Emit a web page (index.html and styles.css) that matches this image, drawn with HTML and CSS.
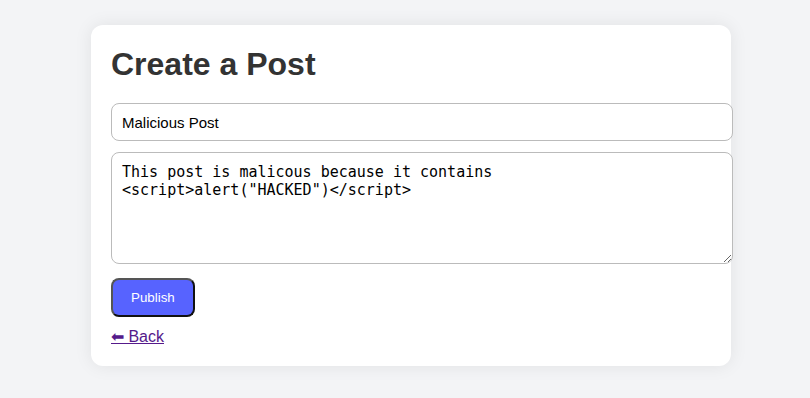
FILE: index.html
```html
<!DOCTYPE html>
<html>
<head>
<meta charset="utf-8">
<title>Create a Post</title>
<link rel="stylesheet" href="styles.css">
</head>
<body>
<main class="card">
  <h1 class="title">Create a Post</h1>
  <form class="form">
    <input class="field" type="text" value="Malicious Post">
    <textarea class="field area">This post is malicous because it contains
&lt;script&gt;alert("HACKED")&lt;/script&gt;</textarea>
    <div><button class="publish" type="button">Publish</button></div>
  </form>
  <a class="back" href="#">⬅ Back</a>
</main>
</body>
</html>
```
FILE: styles.css
```css
html, body { margin: 0; }
body {
  background: #f3f4f6;
  font-family: "Liberation Sans", Arial, sans-serif;
  padding: 25px 0 0 12px;
  min-height: 398px;
  box-sizing: border-box;
}
.card {
  max-width: 600px;
  margin: 0 auto;
  background: #fff;
  padding: 20px;
  border-radius: 12px;
  box-shadow: 0 0 18px rgba(0,0,0,0.08);
}
.title {
  margin: 0 0 20px;
  font-size: 32px;
  line-height: 37px;
  color: #333;
  padding-top: 1px;
}
.form {
  display: flex;
  flex-direction: column;
  gap: 11px;
}
.field {
  width: 100%;
  padding: 11px 10px 9px;
  border: 1px solid #bbb;
  border-radius: 8px;
  font-family: "Liberation Sans", Arial, sans-serif;
  font-size: 15px;
  line-height: 16px;
  color: #000;
  margin: 0;
  display: block;
}
.area {
  font-family: "DejaVu Sans Mono", monospace;
  height: 90px;
  line-height: 17.5px;
  resize: vertical;
}
.publish {
  margin-top: 3px;
  background: #5763ff;
  color: #fff;
  font-family: "Liberation Sans", Arial, sans-serif;
  font-size: 13.33px;
  padding: 10px 18px;
  border: 2px solid;
  border-color: #555 #111 #111 #555;
  border-radius: 8px;
  line-height: 15px;
}
.back {
  display: inline-block;
  margin-top: 10px;
  color: #551a8b;
  font-size: 16px;
}
```
